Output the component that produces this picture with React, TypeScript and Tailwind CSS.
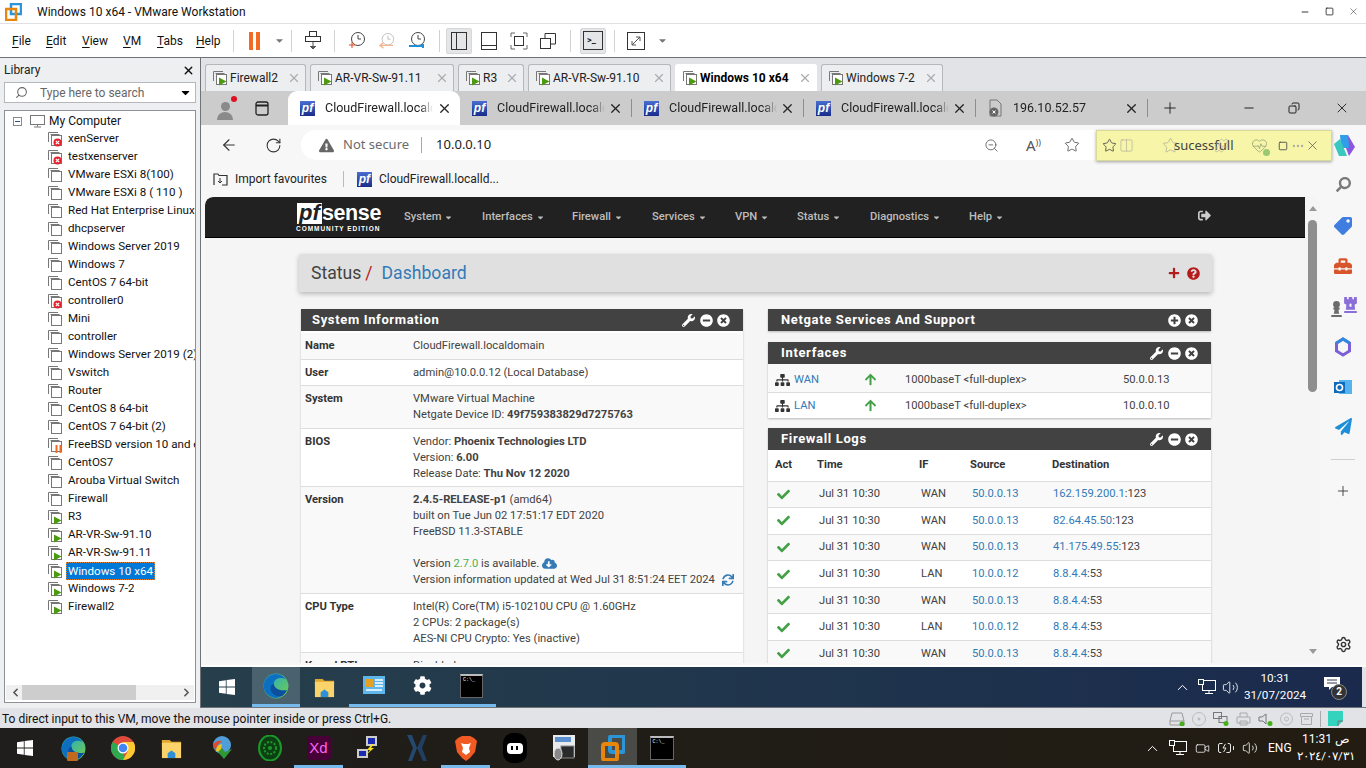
import React from "react";
import { FaWrench, FaMinusCircle, FaTimesCircle, FaPlusCircle, FaSitemap, FaArrowUp, FaCheck, FaCloudDownloadAlt, FaSync, FaPlus, FaQuestionCircle, FaCaretDown, FaSignOutAlt, FaSearch, FaTag, FaToolbox, FaChessRook, FaChessPawn, FaPaperPlane, FaCog, FaExclamationTriangle } from "react-icons/fa";
import { X, Search, ChevronUp, ChevronLeft, ChevronRight, ArrowLeft, RotateCw, Star, ZoomOut, Plus, Minus, Copy, Settings, Columns2, Square, Volume2, Video, BatteryCharging, HeartPulse, Puzzle, MoreHorizontal } from "lucide-react";

const SEGOE = "font-['Roboto','Noto_Sans',sans-serif]";

function VmIcon({ state }: { state?: "off" | "run" | "err" | "pause" }) {
  return (
    <svg width="16" height="16" viewBox="0 0 16 16" className="shrink-0">
      <path d="M1.5 11V1.5H11" fill="none" stroke="#777" />
      <path d="M3.5 3.5h9" fill="none" stroke="#777" />
      <rect x="4.5" y="4.5" width="10" height="10" fill="#fff" stroke="#777" />
      {state === "run" && <path d="M7 7.5l7.5 4-7.5 4z" fill="#4b9a10" />}
      {state === "err" && (
        <g>
          <circle cx="10.5" cy="11.5" r="4" fill="#e8202c" />
          <path d="M8.8 9.8l3.4 3.4M12.2 9.8l-3.4 3.4" stroke="#fff" strokeWidth="1.2" />
        </g>
      )}
      {state === "pause" && <path d="M8.5 8h2v8h-2zM12.5 8h2v8h-2z" fill="#ef6a1f" />}
    </svg>
  );
}

function PfIcon() {
  return (
    <span className="w-[15px] h-[15px] shrink-0 bg-gradient-to-b from-[#4a6fd0] to-[#1a2c8c] text-white text-[12px] leading-[14px] font-bold italic text-center font-['Liberation_Sans',sans-serif]">pf</span>
  );
}

function WinLogo({ size = 16, color = "#fff" }: { size?: number; color?: string }) {
  return (
    <svg width={size} height={size} viewBox="0 0 16 16">
      <path d="M0 2.2l6.8-1v6.4H0zM7.6 1.1L16 0v7.6H7.6zM0 8.4h6.8v6.4L0 13.8zM7.6 8.4H16V16l-8.4-1.1z" fill={color} />
    </svg>
  );
}

function EdgeLogo({ size = 28, id }: { size?: number; id: string }) {
  return (
    <svg width={size} height={size} viewBox="0 0 24 24">
      <defs>
        <linearGradient id={id} x1="0" y1="0" x2="1" y2="1">
          <stop offset="0" stopColor="#1fa4d8" />
          <stop offset="1" stopColor="#72d045" />
        </linearGradient>
      </defs>
      <circle cx="12" cy="12" r="11.5" fill={`url(#${id})`} />
      <path d="M.6 12C1 6 6 1 12 1c4 0 7 2 9 5-5-3-11-1-11 4 0 5 6 7 12 6-2 4-6 7-10 7-6 0-11.400-5-11.400-11z" fill="#0c6fc0" />
      <path d="M10 10c0 5 6 7 12 6-1 2-2 3-4 5-5 2-11-2-11-7 0-2 1-3 3-4z" fill="#0c4f9c" />
    </svg>
  );
}

function Folder({ size = 24 }: { size?: number }) {
  return (
    <svg width={size} height={size} viewBox="0 0 24 24">
      <path d="M2 3h8l2 2h10v4H2z" fill="#e0a92e" />
      <rect x="2" y="6" width="20" height="16" fill="#fbd36b" />
      <path d="M8 22v-5l4-3 4 3v5z" fill="#2f8fd8" />
    </svg>
  );
}

function Cmd({ w = 22, h = 22 }: { w?: number; h?: number }) {
  return (
    <span className="bg-black border-t-2 border-[#bbbbbb] border-x border-b border-x-[#666] border-b-[#666] font-['Liberation_Mono',monospace] text-white text-[5px] leading-[8px] pl-[2px] flex flex-col shrink-0" style={{ width: w, height: h }}>
      <span>C:\_</span>
    </span>
  );
}

function Tab({ w, label, active }: { w: number; label: string; active?: boolean }) {
  return (
    <div className={`h-[27px] flex items-center pl-[6px] border border-b-0 rounded-t-[3px] shrink-0 ${active ? "bg-white border-white" : "bg-[#eceef0] border-[#b5b7ba]"}`} style={{ width: w }}>
      <VmIcon state="run" />
      <span className={`ml-[2px] text-[12px] whitespace-nowrap ${SEGOE} ${active ? "font-bold text-black" : "text-[#222]"}`}>{label}</span>
      <span className="flex-1" />
      <X size={14} className="text-[#a9abad] mr-[4px]" />
    </div>
  );
}

function BrowserTab({ label, active, file }: { label: string; active?: boolean; file?: boolean }) {
  return (
    <div className={`w-[172px] h-[34px] flex items-center shrink-0 pl-[12px] pr-[8px] ${active ? "bg-white rounded-t-[9px]" : "border-r border-[#8e8e8e] my-[8px] !h-[18px]"}`}>
      {file ? (
        <svg width="15" height="18" viewBox="0 0 15 18" className="shrink-0">
          <path d="M2 1h7l4 4v12H2z" fill="none" stroke="#777" />
          <circle cx="6" cy="13" r="4.500" fill="#666" />
          <path d="M4.500 11.500l3 3M7.500 11.500l-3 3" stroke="#fff" />
        </svg>
      ) : (
        <PfIcon />
      )}
      <span className="ml-[10px] w-[108px] overflow-hidden whitespace-nowrap text-[12.500px] text-[#222] font-['Roboto',sans-serif] [mask-image:linear-gradient(to_right,black_88%,transparent)]">{label}</span>
      <span className="flex-1" />
      <X size={15} className="text-[#222] shrink-0" />
    </div>
  );
}

const tree: [string, "off" | "err" | "run" | "pause"][] = [
  ["xenServer", "err"], ["testxenserver", "err"], ["VMware ESXi 8(100)", "off"], ["VMware ESXi 8 ( 110 )", "off"],
  ["Red Hat Enterprise Linux", "off"], ["dhcpserver", "off"], ["Windows Server 2019", "off"], ["Windows 7", "off"],
  ["CentOS 7 64-bit", "off"], ["controller0", "err"], ["Mini", "off"], ["controller", "off"],
  ["Windows Server 2019 (2)", "off"], ["Vswitch", "off"], ["Router", "off"], ["CentOS 8 64-bit", "off"],
  ["CentOS 7 64-bit (2)", "off"], ["FreeBSD version 10 and earlier", "pause"], ["CentOS7", "off"], ["Arouba Virtual Switch", "off"],
  ["Firewall", "off"], ["R3", "run"], ["AR-VR-Sw-91.10", "run"], ["AR-VR-Sw-91.11", "run"],
  ["Windows 10 x64", "run"], ["Windows 7-2", "run"], ["Firewall2", "run"],
];

function Sidebar() {
  return (
    <aside className={`w-[200px] shrink-0 bg-[#eeeff0] flex flex-col pl-[4px] pr-[4px] pb-[5px] ${SEGOE}`}>
      <div className="h-[24px] flex items-center justify-between text-[12px] text-[#222] pr-[1px]">
        <span>Library</span>
        <X size={13} strokeWidth={2.5} className="text-[#111]" />
      </div>
      <div className="h-[21px] bg-white border border-[#b5b7ba] flex items-center pl-[10px] pr-[3px] text-[12px] text-[#666]">
        <Search size={13} className="text-[#666] -scale-x-100" />
        <span className="ml-[12px]">Type here to search</span>
        <span className="flex-1" />
        <FaCaretDown size={13} className="text-black" />
      </div>
      <div className="mt-[7px] flex-1 bg-white border border-[#8f9196] flex flex-col overflow-hidden min-h-0">
        <div className="flex-1 pt-px min-h-0 overflow-hidden">
          <div className="h-[18px] flex items-center pl-[8px] text-[12px] text-[#111]">
            <span className="w-[9px] h-[9px] border border-[#8a8a8a] flex items-center justify-center text-[#3b6ab0] mr-[8px]"><span className="w-[5px] h-px bg-[#27508f]" /></span>
            <svg width="15" height="14" viewBox="0 0 15 14" className="shrink-0"><rect x=".5" y="1.500" width="14" height="9" fill="none" stroke="#777" /><path d="M7.500 10.500v2M4 13h7" stroke="#777" /></svg>
            <span className="ml-[4px]">My Computer</span>
          </div>
          {tree.map(([name, st]) => (
            <div key={name} className="h-[18px] flex items-center pl-[42px] text-[11.600px] text-[#111] whitespace-nowrap">
              <VmIcon state={st} />
              {name === "Windows 10 x64" ? (
                <span className="ml-[3px] px-[1px] h-[18px] leading-[16px] bg-[#0078d7] text-white border border-dotted border-[#e08030]">{name}</span>
              ) : (
                <span className="ml-[5px] overflow-hidden">{name}</span>
              )}
            </div>
          ))}
        </div>
        <div className="h-[15px] mx-px mb-[2px] bg-[#f0f0f0] flex items-center justify-between shrink-0">
          <ChevronLeft size={13} strokeWidth={3} className="text-[#555] ml-[3px]" />
          <div className="w-[114px] h-[15px] bg-[#cdcdcd] mr-[44px]" />
          <ChevronRight size={13} strokeWidth={3} className="text-[#555] mr-[1px]" />
        </div>
      </div>
    </aside>
  );
}

function Heading({ title, wrench = true, plus, right }: { title: string; wrench?: boolean; plus?: boolean; right?: boolean }) {
  return (
    <div className={`h-[22px] bg-[#424242] flex items-center pr-[13px] text-white shrink-0 ${right ? "pl-[13px]" : "pl-[11px]"}`}>
      <span className="text-[13px] font-bold tracking-[0.65px] flex-1">{title}</span>
      <span className="flex items-center gap-[5px]">
        {wrench && <FaWrench size={13} />}
        {plus ? <FaPlusCircle size={13} /> : <FaMinusCircle size={13} />}
        <FaTimesCircle size={13} className="ml-[-1px]" />
      </span>
    </div>
  );
}

function InfoRow({ label, odd, tight, children }: { label: string; odd?: boolean; tight?: boolean; children: React.ReactNode }) {
  return (
    <div className={`flex border-b border-[#dddddd] pt-[5px] ${tight ? "pb-[4px]" : "pb-[5px]"} ${odd ? "bg-[#f9f9f9]" : "bg-white"}`}>
      <div className="w-[112px] pl-[4px] font-bold text-[#333]">{label}</div>
      <div className="flex-1 text-[#424242]">{children}</div>
    </div>
  );
}

const logs = [
  ["WAN", "50.0.0.13", "162.159.200.1", "123"],
  ["WAN", "50.0.0.13", "82.64.45.50", "123"],
  ["WAN", "50.0.0.13", "41.175.49.55", "123"],
  ["LAN", "10.0.0.12", "8.8.4.4", "53"],
  ["WAN", "50.0.0.13", "8.8.4.4", "53"],
  ["LAN", "10.0.0.12", "8.8.4.4", "53"],
  ["WAN", "50.0.0.13", "8.8.4.4", "53"],
];

function PfNavItem({ w, label }: { w: number; label: string }) {
  return (
    <div className="flex items-center gap-[3px] text-[11.2px] font-medium text-[#bdbdbd] whitespace-nowrap shrink-0" style={{ width: w }}>
      {label}
      <FaCaretDown size={9} />
    </div>
  );
}

function PfSense() {
  return (
    <div className="flex-1 min-w-0 bg-[#f5f5f5] flex flex-col overflow-hidden font-['Roboto',sans-serif] text-[11.2px] leading-[16px] rounded-tl-[8px]">
      <div className="h-[41px] bg-[#212121] shrink-0 flex items-center pl-[91px] rounded-tl-[8px] border-b border-black">
        <div className="w-[108px] h-[41px] shrink-0 flex flex-col pt-[5px]">
          <div className="flex h-[23px] items-center ml-[1px]">
            <span className="w-[25px] h-[21px] bg-white text-[#212121] italic font-bold text-[22px] leading-[19px] text-center font-['Liberation_Sans',sans-serif]">pf</span>
            <span className="text-white font-bold text-[21.500px] leading-[22px] tracking-[-0.4px] font-['Liberation_Sans',sans-serif]">sense</span>
          </div>
          <span className="text-white text-[6.500px] leading-[8px] font-bold tracking-[0.95px] whitespace-nowrap font-['Liberation_Sans',sans-serif]">COMMUNITY EDITION</span>
        </div>
        <PfNavItem w={78} label="System" />
        <PfNavItem w={90} label="Interfaces" />
        <PfNavItem w={80} label="Firewall" />
        <PfNavItem w={83} label="Services" />
        <PfNavItem w={62} label="VPN" />
        <PfNavItem w={73} label="Status" />
        <PfNavItem w={99} label="Diagnostics" />
        <PfNavItem w={229} label="Help" />
        <FaSignOutAlt size={13} className="text-[#cccccc] -mt-[4px]" />
      </div>
      <div className="flex-1 min-h-0 overflow-hidden pl-[94px] pt-[16px]">
        <div className="w-[913px] h-[38px] bg-[#e0e0e0] shadow-[0_2px_5px_rgba(0,0,0,0.25)] rounded-[2px] flex items-center pl-[12px] pr-[12px]">
          <span className="text-[17.600px] text-[#424242]">Status</span>
          <span className="text-[17.600px] text-[#b71c1c] ml-[4px] mr-[9px]">/</span>
          <span className="text-[17.600px] text-[#337ab7]">Dashboard</span>
          <span className="flex-1" />
          <FaPlus size={12} className="text-[#b71c1c] mr-[7px]" />
          <FaQuestionCircle size={13} className="text-[#b71c1c]" />
        </div>
        <div className="flex mt-[17px] pl-[2px] items-start">
          <section className="w-[442px] shrink-0 flex flex-col shadow-[0_1px_2px_rgba(0,0,0,0.2)]">
            <Heading title="System Information" />
            <div className="h-[2px] bg-white" />
            <InfoRow label="Name" odd>CloudFirewall.localdomain</InfoRow>
            <InfoRow label="User" tight>admin@10.0.0.12 (Local Database)</InfoRow>
            <InfoRow label="System" odd>VMware Virtual Machine<br />Netgate Device ID: <b>49f759383829d7275763</b></InfoRow>
            <InfoRow label="BIOS" tight>Vendor: <b>Phoenix Technologies LTD</b><br />Version: <b>6.00</b><br />Release Date: <b>Thu Nov 12 2020</b></InfoRow>
            <InfoRow label="Version" odd>
              <b>2.4.5-RELEASE-p1</b> (amd64)<br />built on Tue Jun 02 17:51:17 EDT 2020<br />FreeBSD 11.3-STABLE<br /><br />
              Version <span className="text-[#4caf50]">2.7.0</span> is available. <FaCloudDownloadAlt size={15} className="inline text-[#337ab7] -mt-[2px]" /><br />
              <span className="inline-flex items-center">Version information updated at Wed Jul 31 8:51:24 EET 2024<FaSync size={12} className="ml-[7px] text-[#337ab7]" /></span>
            </InfoRow>
            <InfoRow label="CPU Type">Intel(R) Core(TM) i5-10210U CPU @ 1.60GHz<br />2 CPUs: 2 package(s)<br />AES-NI CPU Crypto: Yes (inactive)</InfoRow>
            <InfoRow label="Kernel PTI" odd>Disabled</InfoRow>
          </section>
          <div className="w-[25px] shrink-0" />
          <section className="w-[443px] shrink-0 flex flex-col">
            <div className="shadow-[0_1px_2px_rgba(0,0,0,0.25)]">
              <Heading title="Netgate Services And Support" wrench={false} plus right />
            </div>
            <div className="mt-[11px] shadow-[0_1px_2px_rgba(0,0,0,0.25)]">
              <Heading title="Interfaces" right />
              {[["WAN", "50.0.0.13", "bg-[#f9f9f9] h-[28px] pt-[3px]"], ["LAN", "10.0.0.10", "bg-white h-[26px] border-t border-[#dddddd]"]].map(([n, ip, bg]) => (
                <div key={n} className={`flex items-center pl-[7px] text-[#424242] ${bg}`}>
                  <FaSitemap size={14} className="text-[#333] w-[15px]" />
                  <span className="ml-[4px] w-[70px] text-[#337ab7]">{n}</span>
                  <FaArrowUp size={13} className="text-[#43a047] w-[13px]" />
                  <span className="ml-[28px] w-[218px]">1000baseT &lt;full-duplex&gt;</span>
                  <span>{ip}</span>
                </div>
              ))}
            </div>
            <div className="mt-[10px] bg-white shadow-[0_1px_2px_rgba(0,0,0,0.25)]">
              <Heading title="Firewall Logs" right />
              <div className="h-[30.500px] grid grid-cols-[42px_102px_51px_82px_1fr] items-center pl-[7px] font-bold text-[#333]">
                <span>Act</span><span>Time</span><span>IF</span><span>Source</span><span>Destination</span>
              </div>
              {logs.map(([i, s, d, p], k) => (
                <div key={k} className={`h-[26.600px] border-t border-[#dddddd] grid grid-cols-[42px_102px_51px_81px_1fr] items-center pl-[9px] text-[#424242] ${k % 2 === 0 ? "bg-[#f9f9f9]" : "bg-white"}`}>
                  <FaCheck size={13} className="text-[#43a047]" />
                  <span>Jul 31 10:30</span>
                  <span>{i}</span>
                  <span className="text-[#337ab7]">{s}</span>
                  <span><span className="text-[#337ab7]">{d}</span>:{p}</span>
                </div>
              ))}
            </div>
          </section>
        </div>
      </div>
    </div>
  );
}

function EdgeRail() {
  return (
    <div className="w-[46px] shrink-0 flex flex-col items-center">
      <FaSearch size={15} className="text-[#7a7a7a] mt-[-18px] -scale-x-100" />
      <FaTag size={18} className="text-[#3f7ee0] mt-[25px] -scale-x-100" />
      <FaToolbox size={18} className="text-[#d8552b] mt-[22px]" />
      <div className="flex items-end mt-[21px]">
        <FaChessPawn size={17} className="text-[#6b6b6b]" />
        <FaChessRook size={17} className="text-[#8a6fd8] -ml-[3px] mb-[4px]" />
      </div>
      <svg width="18" height="20" viewBox="0 0 18 20" className="mt-[20px]">
        <path d="M9 2l6.500 4v8L9 18l-6.500-4V6z" fill="none" stroke="#7a5fd8" strokeWidth="3" />
        <path d="M2.500 6L9 2l6.500 4" fill="none" stroke="#2f8ae0" strokeWidth="3" />
      </svg>
      <svg width="18" height="18" viewBox="0 0 18 18" className="mt-[21px]">
        <rect x="5" y="2" width="13" height="14" fill="#55b4f0" />
        <rect x="0" y="4" width="11" height="11" fill="#0f6cbd" />
        <circle cx="5.500" cy="9.500" r="3" fill="none" stroke="#fff" strokeWidth="1.600" />
      </svg>
      <FaPaperPlane size={17} className="text-[#1d8fd8] mt-[22px]" />
      <div className="w-[24px] h-px bg-[#cfcfcf] mt-[24px]" />
      <Plus size={16} strokeWidth={1.3} className="text-[#333] mt-[23px]" />
      <span className="flex-1" />
      <Settings size={17} className="text-[#333] mb-[12px]" />
    </div>
  );
}

function Browser() {
  return (
    <div className="flex-1 min-h-0 flex flex-col">
      {/* tab strip */}
      <div className="h-[34px] bg-[#cccccc] flex items-center shrink-0 text-[#222]">
        <div className="w-[87px] flex items-center pl-[14px] shrink-0">
          <div className="relative w-[20px] h-[24px] flex flex-col items-center justify-end">
            <span className="w-[9px] h-[9px] rounded-full bg-[#8a8a8a]" />
            <span className="w-[16px] h-[8px] rounded-t-full bg-[#8a8a8a] mt-px" />
            <span className="absolute top-0 right-[-2px] w-[6px] h-[6px] rounded-full bg-[#e01020]" />
          </div>
          <svg width="14" height="15" viewBox="0 0 14 15" className="ml-[20px]"><rect x="1" y="1" width="12" height="13" rx="2" fill="none" stroke="#222" strokeWidth="1.300" /><path d="M1 4.500h12" stroke="#222" strokeWidth="2" /></svg>
        </div>
        <BrowserTab label="CloudFirewall.localdomain" active />
        <BrowserTab label="CloudFirewall.localdomain" />
        <BrowserTab label="CloudFirewall.localdomain" />
        <BrowserTab label="CloudFirewall.localdomain" />
        <BrowserTab label="196.10.52.57" file />
        <Plus size={18} strokeWidth={1.3} className="ml-[13px]" />
        <span className="flex-1" />
        <Minus size={14} className="mr-[32px]" />
        <Copy size={12} className="mr-[34px] -scale-x-100" />
        <X size={16} strokeWidth={1.4} className="mr-[16px]" />
      </div>
      {/* toolbar */}
      <div className="h-[40px] bg-[#f7f7f7] flex items-center shrink-0 relative pl-[19px] text-[#333]">
        <ArrowLeft size={18} strokeWidth={1.5} />
        <RotateCw size={17} strokeWidth={1.5} className="ml-[27px]" />
        <div className="ml-[19px] w-[799px] h-[30px] bg-white rounded-l-full flex items-center pl-[18px] pr-[14px] text-[13px] font-['Noto_Sans',sans-serif]">
          <FaExclamationTriangle size={15} className="text-[#666]" />
          <span className="ml-[9px] text-[#6b6b6b]">Not secure</span>
          <span className="w-px h-[16px] bg-[#aaa] ml-[12px]" />
          <span className="ml-[14px] text-[#222]">10.0.0.10</span>
          <span className="flex-1" />
          <ZoomOut size={15} strokeWidth={1.3} className="text-[#555] mr-[27px]" />
          <span className="text-[15px] text-[#555] mr-[23px] leading-none">A<span className="text-[9px] align-top">))</span></span>
          <Star size={16} strokeWidth={1.3} className="text-[#555] mr-[6px]" />
        </div>
        {/* notification over toolbar */}
        <div className="absolute left-[895px] top-[5px] w-[236px] h-[31px] bg-[#f7f5a8] border border-[#d9d99b] shadow-[0_1px_3px_rgba(0,0,0,0.35)] flex items-center pl-[5px] pr-[8px] font-['Noto_Sans',sans-serif]">
          <Star size={15} strokeWidth={1.3} className="text-[#444]" />
          <Columns2 size={15} strokeWidth={1} className="text-[#aaa99a] ml-[2px]" />
          <Star size={17} strokeWidth={1} className="text-[#aaa99a] ml-[28px]" />
          <span className="text-[13px] text-[#444] -ml-[5px] w-[46px] whitespace-nowrap">sucessfull</span>
          <Puzzle size={15} strokeWidth={1} className="text-[#aaa99a] -ml-[6px]" />
          <span className="w-[4px]" />
          <span className="relative ml-[18px]">
            <HeartPulse size={17} strokeWidth={1} className="text-[#8a9a70]" />
            <span className="absolute right-[-2px] bottom-[-2px] w-[7px] h-[7px] rounded-full bg-[#9cc873]" />
          </span>
          <Square size={10} className="text-[#444] ml-[10px]" />
          <MoreHorizontal size={14} className="text-[#aaa] ml-[3px]" />
          <X size={15} strokeWidth={1.200} className="text-[#555]" />
        </div>
        <svg width="24" height="24" viewBox="0 0 24 24" className="absolute left-[1131px] top-[8px]">
          <path d="M16 2l7 12-6 9-3-8z" fill="#8a58e0" />
          <path d="M8 2h8l1 13H9z" fill="#2f9fe8" />
          <path d="M2 11l6-5 7 17H7z" fill="#38c8c0" />
        </svg>
      </div>
      {/* favourites */}
      <div className={`h-[30px] bg-[#f7f7f7] flex items-center shrink-0 pl-[12px] pb-[2px] text-[12px] text-[#222] ${SEGOE}`}>
        <svg width="15" height="14" viewBox="0 0 15 14"><path d="M1 13V2h4l1 1.500h8V13H9" fill="none" stroke="#333" strokeWidth="1.200" /><path d="M5 9l2 2 2-2M7 6v5" fill="none" stroke="#333" /></svg>
        <span className="ml-[7px]">Import favourites</span>
        <span className="w-px h-[16px] bg-[#bbb] ml-[16px]" />
        <span className="ml-[13px] flex"><PfIcon /></span>
        <span className="ml-[7px]">CloudFirewall.localld...</span>
      </div>
      {/* page */}
      <div className="flex-1 min-h-0 bg-[#f7f7f7] flex pl-[4px]">
        <div className="flex-1 min-w-0 flex pt-[2px] pb-[2px]">
          <PfSense />
          <div className="w-[15px] shrink-0 bg-[#f5f5f5] rounded-tr-[8px] flex flex-col items-center pt-[9px]">
            <span className="w-0 h-0 border-x-[4px] border-x-transparent border-b-[5px] border-b-[#999]" />
            <span className="w-[9px] h-[172px] bg-[#8e8e8e] rounded-full mt-[9px]" />
            <span className="flex-1" />
            <span className="w-0 h-0 border-x-[4px] border-x-transparent border-t-[5px] border-t-[#999] mb-[9px]" />
          </div>
        </div>
        <EdgeRail />
      </div>
    </div>
  );
}

function InnerTaskbar() {
  return (
    <div className="h-[40px] shrink-0 bg-gradient-to-r from-[#263f4b] to-[#1a2a4d] flex items-center text-white mt-[2px] border-r-[4px] border-[#e1e3e6]">
      <div className="w-[51px] h-full flex items-center justify-center shrink-0"><WinLogo size={16} /></div>
      <div className="w-[48px] h-full bg-[#4a626d] border-b-[3px] border-[#76b9ed] flex items-center justify-center shrink-0"><EdgeLogo id="e1" size={26} /></div>
      <div className="w-[49px] h-full flex items-center justify-center shrink-0"><Folder size={23} /></div>
      <div className="w-[49px] h-full flex items-center justify-center shrink-0 border-b-[3px] border-[#76b9ed]">
        <svg width="22" height="20" viewBox="0 0 22 20"><rect width="22" height="18" fill="#5fb6ea" /><rect x="2" y="3" width="8" height="8" fill="#e8a020" /><path d="M12 4h8M12 7h8M12 10h8M3 14h16" stroke="#fff" strokeWidth="1.500" /></svg>
      </div>
      <div className="w-[49px] h-full flex items-center justify-center shrink-0 border-b-[3px] border-[#76b9ed]"><FaCog size={19} /></div>
      <div className="w-[49px] h-full flex items-center justify-center shrink-0 border-b-[3px] border-[#76b9ed]"><Cmd w={23} h={24} /></div>
      <span className="flex-1" />
      <ChevronUp size={17} strokeWidth={1.4} />
      <svg width="18" height="16" viewBox="0 0 18 16" className="ml-[7px]"><rect x="4.500" y="1.500" width="13" height="10" fill="none" stroke="#fff" /><path d="M11 11.500v3M7 14.500h8" stroke="#fff" /><rect x=".5" y=".5" width="5" height="5" fill="#1f3444" stroke="#fff" /></svg>
      <Volume2 size={17} strokeWidth={1.2} className="ml-[6px]" />
      <div className={`ml-[1px] w-[70px] flex flex-col items-center text-[11.700px] leading-[17px] ${SEGOE}`}>
        <span>10:31</span>
        <span className="whitespace-nowrap">31/07/2024</span>
      </div>
      <div className="relative ml-[14px] mr-[20px] w-[18px] h-[24px]">
        <svg width="16" height="14" viewBox="0 0 16 14" className="mt-[2px]"><path d="M0 0h16v10H8l-3 3v-3H0z" fill="#fff" /><path d="M3 3h10M3 6h10" stroke="#2a3a4d" /></svg>
        <span className={`absolute left-[7px] top-[9px] w-[16px] h-[16px] rounded-full bg-[#333] border border-[#888] text-[10px] leading-[14px] text-center font-bold ${SEGOE}`}>2</span>
      </div>
    </div>
  );
}

function StatusBar() {
  return (
    <div className={`h-[20px] shrink-0 bg-[#e1e3e6] flex items-center pl-[2px] pt-px text-[12px] text-[#111] ${SEGOE}`}>
      <span>To direct input to this VM, move the mouse pointer inside or press Ctrl+G.</span>
      <span className="flex-1" />
      <div className="flex items-center gap-[7px] text-[#999] mr-[23px]">
        <svg width="16" height="14" viewBox="0 0 16 14"><path d="M3 1h10l2 8v4H1V9z" fill="none" stroke="#999" /><path d="M1 9h14" stroke="#999" /><circle cx="13" cy="12" r="2.500" fill="#46b01c" /></svg>
        <svg width="14" height="14" viewBox="0 0 14 14"><circle cx="7" cy="7" r="6.500" fill="none" stroke="#bbb" /><circle cx="7" cy="7" r="1.500" fill="#bbb" /></svg>
        <svg width="16" height="14" viewBox="0 0 16 14"><rect x=".5" y=".5" width="8" height="6" fill="none" stroke="#777" /><rect x="6" y="4.500" width="8" height="6" fill="none" stroke="#777" /><circle cx="13" cy="11.500" r="2.500" fill="#46b01c" /></svg>
        <svg width="15" height="14" viewBox="0 0 15 14"><path d="M4 5V1h7v4M1 5h13v6H1zM4 9h7v4H4z" fill="none" stroke="#aaa" /></svg>
        <svg width="15" height="14" viewBox="0 0 15 14"><path d="M1 5h3l4-3v10l-3-3H1z" fill="none" stroke="#777" /><circle cx="12" cy="11.500" r="2.500" fill="#46b01c" /></svg>
        <svg width="13" height="14" viewBox="0 0 13 14"><circle cx="6.500" cy="7" r="6" fill="none" stroke="#bbb" /><circle cx="6.500" cy="7" r="2" fill="none" stroke="#bbb" /></svg>
        <svg width="13" height="13" viewBox="0 0 13 13"><path d="M.5 1.500h12v3H.5zM1.500 4.500v8h10v-8M4 7h5" fill="none" stroke="#aaa" /></svg>
        <span className="w-px h-[16px] bg-[#aaa]" />
        <svg width="15" height="15" viewBox="0 0 15 15"><path d="M0 0h15v10l-5 5H0z" fill="#34d3bd" /><path d="M10 15v-5h5" fill="none" stroke="#777" /></svg>
      </div>
    </div>
  );
}

function HostTask({ children, on, hi }: { children: React.ReactNode; on?: boolean; hi?: boolean }) {
  return (
    <div className={`w-[49px] h-full shrink-0 flex items-center justify-center ${on ? "border-b-[3px] border-[#76b9ed] pt-[3px]" : ""} ${hi ? "bg-[#4a4a46]" : ""}`}>{children}</div>
  );
}

function HostTaskbar() {
  return (
    <div className="h-[40px] shrink-0 bg-gradient-to-r from-[#1f1e1c] to-[#221c12] flex items-center text-white">
      <HostTask><WinLogo size={16} /></HostTask>
      <HostTask>
        <div className="relative"><EdgeLogo id="e2" size={25} /><span className="absolute right-[8px] bottom-0 w-[11px] h-[9px] bg-[#c06a20] rounded-[1px]" /></div>
      </HostTask>
      <HostTask>
        <svg width="24" height="24" viewBox="0 0 24 24">
          <circle cx="12" cy="12" r="12" fill="#de4b3c" />
          <path d="M12 12L1.600 18A12 12 0 0 0 14 23.800z" fill="#2da94f" />
          <path d="M12 6h10.500A12 12 0 0 1 12 24l5-9z" fill="#fcc933" />
          <path d="M12 12L1.600 18A12 12 0 0 1 1.600 6z" fill="#2da94f" />
          <circle cx="12" cy="12" r="5.500" fill="#fff" /><circle cx="12" cy="12" r="4.300" fill="#4285f4" />
        </svg>
      </HostTask>
      <HostTask><Folder size={23} /></HostTask>
      <HostTask>
        <svg width="26" height="26" viewBox="0 0 26 26">
          <circle cx="14" cy="10" r="9" fill="#4f9ed8" />
          <path d="M5 10c3-5 8-5 9-3-4 1-6 5-6 9z" fill="#e04830" />
          <path d="M8 16c0-4 3-7 6-7-1 3-1 6 0 9z" fill="#f2c417" />
          <path d="M10 17l6 7 8-10-7 3-3-4z" fill="#2f9a35" />
        </svg>
      </HostTask>
      <HostTask>
        <svg width="24" height="26" viewBox="0 0 24 26"><ellipse cx="12" cy="13" rx="11" ry="12.500" fill="#0c3f12" stroke="#1b9a2a" strokeWidth="2" /><circle cx="12" cy="13" r="6" fill="none" stroke="#1b9a2a" strokeWidth="2" strokeDasharray="2 1.500" /><circle cx="12" cy="13" r="2" fill="#1b9a2a" /></svg>
      </HostTask>
      <HostTask on>
        <span className="w-[24px] h-[24px] rounded-[4px] bg-[#470137] text-[#ff61f6] text-[15px] leading-[24px] text-center font-['Liberation_Sans',sans-serif]">Xd</span>
      </HostTask>
      <HostTask>
        <svg width="24" height="26" viewBox="0 0 24 26"><rect x="10" y="1" width="11" height="10" fill="#ccc" /><rect x="12" y="3" width="7" height="6" fill="#1a2ab0" /><rect x="1" y="14" width="11" height="9" fill="#ccc" /><rect x="3" y="16" width="7" height="5" fill="#1a2ab0" /><path d="M16 9l-5 6h3l-4 5 8-7h-3l3-4z" fill="#f5e11a" /></svg>
      </HostTask>
      <HostTask>
        <svg width="24" height="28" viewBox="0 0 24 28"><path d="M2 1h5l5 13-5 13H3l5-13z" fill="#24486e" /><path d="M22 1h-4l-6 13 6 13h4l-5-13z" fill="#1f3f63" /></svg>
      </HostTask>
      <HostTask on>
        <svg width="22" height="26" viewBox="0 0 22 26"><path d="M3 3l4-2h8l4 2 3 3-2 11-5 6-4 3-4-3-5-6L0 6z" fill="#f15a22" /><path d="M6 8l3 1h4l3-1-2 5 1 4-4 3-4-3 1-4z" fill="#fff" /></svg>
      </HostTask>
      <HostTask>
        <span className="w-[24px] h-[30px] rounded-[10px] bg-black flex items-center justify-center">
          <span className="w-[16px] h-[11px] rounded-[4px] bg-white flex items-center justify-center gap-[3px]"><span className="w-[2px] h-[4px] bg-black" /><span className="w-[2px] h-[4px] bg-black" /></span>
        </span>
      </HostTask>
      <HostTask>
        <svg width="24" height="28" viewBox="0 0 24 28"><rect x="1" y="1" width="22" height="22" fill="#e8eaec" /><rect x="3" y="3" width="16" height="5" fill="#5a8fd0" /><rect x="9" y="12" width="13" height="12" fill="#2a2a2a" stroke="#888" /><ellipse cx="6" cy="20" rx="4" ry="6" fill="#888" stroke="#ddd" /></svg>
      </HostTask>
      <HostTask on hi>
        <svg width="24" height="26" viewBox="0 0 24 26"><rect x="9" y="1" width="14" height="16" rx="2" fill="none" stroke="#2b95d8" strokeWidth="4" /><rect x="2" y="9" width="14" height="16" rx="2" fill="none" stroke="#e8850c" strokeWidth="4" /></svg>
      </HostTask>
      <HostTask on><Cmd w={24} h={24} /></HostTask>
      <span className="flex-1" />
      <ChevronUp size={17} strokeWidth={1.4} />
      <svg width="18" height="16" viewBox="0 0 18 16" className="ml-[8px]"><rect x="4.500" y="1.500" width="13" height="10" fill="none" stroke="#fff" /><path d="M11 11.500v3M7 14.500h8" stroke="#fff" /><rect x=".5" y=".5" width="5" height="5" fill="#222" stroke="#fff" /></svg>
      <Video size={15} strokeWidth={1.200} className="ml-[8px]" />
      <BatteryCharging size={18} strokeWidth={1.200} className="ml-[7px]" />
      <Volume2 size={16} strokeWidth={1.200} className="ml-[7px]" />
      <span className={`ml-[10px] w-[23px] text-[12px] ${SEGOE}`}>ENG</span>
      <div className={`ml-[3px] mr-[8px] w-[64px] flex flex-col items-center text-[12px] leading-[17px] ${SEGOE}`}>
        <span className="whitespace-nowrap" dir="rtl">ص 11:31</span>
        <span className="whitespace-nowrap text-[11.500px]">٢٠٢٤/٠٧/٣١</span>
      </div>
    </div>
  );
}

function TBtn({ children, w = 30, on }: { children: React.ReactNode; w?: number; on?: boolean }) {
  return (
    <div className={`h-[26px] flex items-center justify-center shrink-0 rounded-[2px] ${on ? "bg-[#e4e6e8] border border-[#d5d7da]" : ""}`} style={{ width: w }}>{children}</div>
  );
}

function Menu({ w, u, rest }: { w: number; u: string; rest: string }) {
  return (
    <span className="shrink-0" style={{ width: w }}><span className="underline underline-offset-2">{u}</span>{rest}</span>
  );
}

export default function App() {
  return (
    <div className="w-[1366px] h-[768px] overflow-hidden bg-white flex flex-col">
      {/* title */}
      <div className={`h-[23px] shrink-0 flex items-center text-[12px] text-[#111] ${SEGOE}`}>
        <svg width="17" height="18" viewBox="0 0 17 18" className="ml-[5px]"><rect x="6" y="1" width="10" height="10" fill="none" stroke="#2b95d8" strokeWidth="2.500" /><rect x="1" y="6" width="10" height="11" fill="none" stroke="#e8850c" strokeWidth="2.500" /></svg>
        <span className="ml-[15px]">Windows 10 x64 - VMware Workstation</span>
        <span className="flex-1" />
        <Minus size={10} strokeWidth={2} className="mr-[15px]" />
        <Square size={9} strokeWidth={2} className="mr-[14px]" />
        <X size={11} strokeWidth={1} className="mr-[7px]" />
      </div>
      {/* menu */}
      <div className={`h-[34px] shrink-0 border-t border-[#dfe0e2] flex items-center pl-[12px] text-[12px] text-[#111] ${SEGOE}`}>
        <Menu w={34} u="F" rest="ile" />
        <Menu w={36} u="E" rest="dit" />
        <Menu w={41} u="V" rest="iew" />
        <Menu w={34} u="V" rest="M" />
        <Menu w={39} u="T" rest="abs" />
        <Menu w={37} u="H" rest="elp" />
        <span className="w-px h-[22px] bg-[#d0d2d4]" />
        <TBtn w={40}><span className="flex gap-[3px]"><span className="w-[4px] h-[18px] bg-[#f26a21]" /><span className="w-[4px] h-[18px] bg-[#f26a21]" /></span></TBtn>
        <FaCaretDown size={11} className="text-[#777] mr-[6px]" />
        <span className="w-px h-[22px] bg-[#d0d2d4]" />
        <TBtn w={42}>
          <svg width="16" height="20" viewBox="0 0 16 20"><rect x="4.500" y=".5" width="7" height="5" fill="none" stroke="#333" /><rect x=".5" y="5.500" width="15" height="5" fill="none" stroke="#333" /><path d="M8 11v5M5 15l3 3 3-3" fill="#555" stroke="#555" /></svg>
        </TBtn>
        <span className="w-px h-[22px] bg-[#d0d2d4]" />
        <TBtn w={44}>
          <svg width="18" height="20" viewBox="0 0 18 20"><circle cx="10" cy="8" r="6.500" fill="none" stroke="#444" /><path d="M10 4v4h3" fill="none" stroke="#444" /><path d="M4 11v6M1 14h6" stroke="#e04a1f" /></svg>
        </TBtn>
        <TBtn w={16}>
          <svg width="18" height="20" viewBox="0 0 18 20"><circle cx="10" cy="8" r="6.500" fill="none" stroke="#bbb" /><path d="M10 4v4h3" fill="none" stroke="#bbb" /><path d="M1 15h15M5 12l-4 3 4 3" fill="none" stroke="#f4b48e" strokeWidth="1.500" /></svg>
        </TBtn>
        <TBtn w={44}>
          <svg width="18" height="20" viewBox="0 0 18 20"><circle cx="10" cy="8" r="6.500" fill="none" stroke="#444" /><path d="M10 4v4h3" fill="none" stroke="#444" /><path d="M1 15h14M15 13v4" stroke="#1f8fd8" strokeWidth="2" /></svg>
        </TBtn>
        <span className="w-px h-[22px] bg-[#d0d2d4] mr-[6px]" />
        <TBtn w={26} on><svg width="16" height="18" viewBox="0 0 16 18"><rect x=".5" y=".5" width="15" height="17" fill="none" stroke="#333" /><path d="M5.500 1v16" stroke="#333" /></svg></TBtn>
        <TBtn w={34}><svg width="16" height="18" viewBox="0 0 16 18"><rect x=".5" y=".5" width="15" height="17" fill="none" stroke="#333" /><path d="M1 13.500h14" stroke="#333" /></svg></TBtn>
        <TBtn w={25}><svg width="18" height="18" viewBox="0 0 18 18"><rect x="4.500" y="4.500" width="9" height="9" fill="none" stroke="#333" /><path d="M1 5V1h4M13 1h4v4M17 13v4h-4M5 17H1v-4" fill="none" stroke="#666" /></svg></TBtn>
        <TBtn w={34}><svg width="16" height="16" viewBox="0 0 16 16"><rect x=".5" y="5.500" width="10" height="10" fill="none" stroke="#333" /><path d="M5 5V.5h10.500V11H11" fill="none" stroke="#333" /></svg></TBtn>
        <span className="w-[5px]" />
        <span className="w-px h-[22px] bg-[#d0d2d4] mr-[9px]" />
        <TBtn w={26} on><span className="w-[20px] h-[19px] border border-[#333] text-[9px] leading-[16px] pl-[3px] font-bold text-[#222]">&gt;_</span></TBtn>
        <span className="w-[8px]" />
        <span className="w-px h-[22px] bg-[#d0d2d4]" />
        <TBtn w={42}><svg width="18" height="18" viewBox="0 0 18 18"><rect x=".5" y=".5" width="17" height="17" fill="none" stroke="#333" /><path d="M5 13l8-8M9 5h4v4M5 9v4h4" fill="none" stroke="#555" /></svg></TBtn>
        <FaCaretDown size={11} className="text-[#777]" />
      </div>
      {/* middle */}
      <div className="flex-1 min-h-0 flex border-t border-[#6f7276]">
        <Sidebar />
        <div className="flex-1 min-w-0 flex flex-col border-l border-[#6f7276] border-b">
          <div className="h-[33px] shrink-0 bg-[#e1e3e6] flex items-end gap-[4px] pl-[4px]">
            <Tab w={101} label="Firewall2" />
            <Tab w={144} label="AR-VR-Sw-91.11" />
            <Tab w={66} label="R3" />
            <Tab w={143} label="AR-VR-Sw-91.10" />
            <Tab w={142} label="Windows 10 x64" active />
            <Tab w={122} label="Windows 7-2" />
          </div>
          <Browser />
          <InnerTaskbar />
        </div>
      </div>
      <StatusBar />
      <HostTaskbar />
    </div>
  );
}
